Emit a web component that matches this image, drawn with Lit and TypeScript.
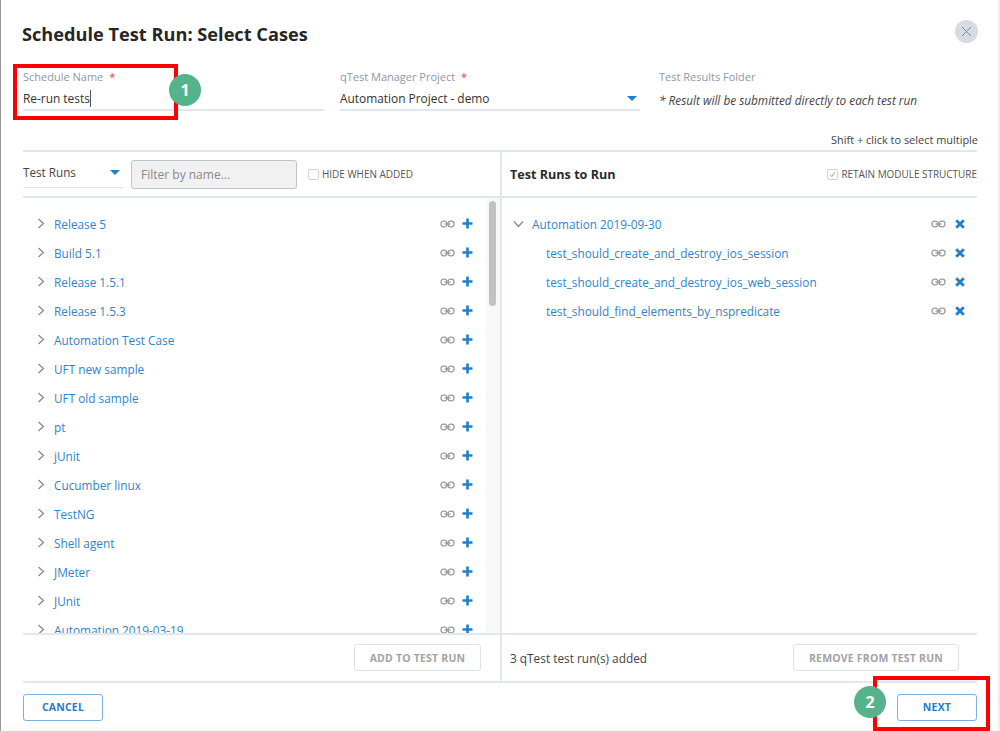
import { LitElement, html, css, svg } from "lit";
import { customElement } from "lit/decorators.js";

const LEFT_RUNS = [
  "Release 5",
  "Build 5.1",
  "Release 1.5.1",
  "Release 1.5.3",
  "Automation Test Case",
  "UFT new sample",
  "UFT old sample",
  "pt",
  "jUnit",
  "Cucumber linux",
  "TestNG",
  "Shell agent",
  "JMeter",
  "JUnit",
  "Automation 2019-03-19",
];

const RIGHT_CASES = [
  "test_should_create_and_destroy_ios_session",
  "test_should_create_and_destroy_ios_web_session",
  "test_should_find_elements_by_nspredicate",
];

const chain = svg`<svg class="chain" width="15" height="10" viewBox="0 0 15 10"><rect x="1" y="2.2" width="6" height="5.6" rx="2.6" fill="none" stroke="#9a9a9a" stroke-width="1.3"/><rect x="8" y="2.2" width="6" height="5.6" rx="2.6" fill="none" stroke="#9a9a9a" stroke-width="1.3"/><path d="M4.5 5h6" stroke="#9a9a9a" stroke-width="1.3"/></svg>`;
const plus = svg`<svg width="11" height="11" viewBox="0 0 11 11"><path d="M5.5 0.5v10M0.5 5.5h10" stroke="#1f7fcb" stroke-width="2.6"/></svg>`;
const cross = svg`<svg width="10" height="10" viewBox="0 0 10 10"><path d="M1.2 1.2l7.6 7.6M8.8 1.2l-7.6 7.6" stroke="#1f7fcb" stroke-width="2.8"/></svg>`;
const chevronRight = svg`<svg width="8" height="11" viewBox="0 0 8 11"><path d="M1.5 1l5 4.5-5 4.5" fill="none" stroke="#8a8a8a" stroke-width="1.3"/></svg>`;
const chevronDown = svg`<svg width="11" height="8" viewBox="0 0 11 8"><path d="M1 1.5l4.5 5 4.5-5" fill="none" stroke="#8a8a8a" stroke-width="1.3"/></svg>`;
const caret = svg`<svg width="10" height="5" viewBox="0 0 10 5"><path d="M0 0h10L5 5z" fill="#1f7fcb"/></svg>`;

@customElement("app-root")
export class AppRoot extends LitElement {
  static styles = css`
    :host {
      display: block;
      position: relative;
      width: 1000px;
      height: 731px;
      overflow: hidden;
      font-family: "Open Sans", sans-serif;
      font-size: 12px;
      color: #333;
      background: #fff;
    }
    .modal {
      box-sizing: border-box;
      height: 731px;
      width: 998px;
      margin-left: 1px;
      padding: 0 21px 0 21px;
      background: linear-gradient(#fff 724px, #f8f8f8);
      display: flex;
      flex-direction: column;
    }
    .edge-left {
      position: absolute;
      left: 0;
      top: 0;
      width: 1px;
      height: 731px;
      background: #999;
    }
    .edge-right {
      position: absolute;
      right: 0;
      top: 0;
      width: 2px;
      height: 731px;
      background: #eee;
    }
    .title-row {
      height: 69px;
      display: flex;
      justify-content: space-between;
      align-items: flex-start;
      flex: none;
    }
    h1 {
      margin: 22px 0 0;
      font-size: 18.2px;
      line-height: 25px;
      font-weight: 700;
      color: #262626;
    }
    .close {
      width: 23px;
      height: 23px;
      margin: 20px 0 0;
      border-radius: 50%;
      background: #d5dce5;
      display: flex;
      align-items: center;
      justify-content: center;
    }
    .fields {
      display: flex;
      height: 42px;
      flex: none;
      padding-left: 1px;
    }
    .field {
      box-sizing: border-box;
      height: 42px;
      border-bottom: 2px solid #e1e7ef;
    }
    .f1 {
      width: 301px;
      margin-right: 16px;
    }
    .f2 {
      width: 300px;
      margin-right: 19px;
    }
    .f3 {
      border: none;
    }
    .label {
      font-size: 11px;
      line-height: 16px;
      color: #8f98a3;
    }
    .req {
      color: #ee3b3b;
      margin-left: 3px;
    }
    .value {
      margin-top: 5px;
      line-height: 17px;
      font-size: 11.9px;
      display: flex;
      justify-content: space-between;
      align-items: center;
      color: #333;
    }
    .cursor {
      border-right: 1px solid #555;
    }
    .value svg {
      margin-right: 3px;
    }
    .note {
      margin-top: 7px;
      font-size: 11.8px;
      line-height: 17px;
      font-style: italic;
      color: #444;
    }
    .hint {
      flex: none;
      height: 39px;
      padding-top: 20px;
      box-sizing: border-box;
      line-height: 17px;
      text-align: right;
      font-size: 10.95px;
      color: #444;
    }
    .panels {
      flex: none;
      margin-left: 1px;
      width: 954px;
      height: 533px;
      display: grid;
      grid-template-columns: 477px 477px;
      border-top: 2px solid #e1e7ef;
      border-bottom: 2px solid #e1e7ef;
      box-sizing: border-box;
    }
    .panel {
      display: flex;
      flex-direction: column;
      min-width: 0;
      min-height: 0;
    }
    .panel.right {
      border-left: 2px solid #e1e7ef;
    }
    .toolbar {
      flex: none;
      box-sizing: border-box;
      height: 46px;
      border-bottom: 2px solid #e1e7ef;
      display: flex;
      align-items: center;
    }
    .right .toolbar {
      padding-left: 8px;
      justify-content: space-between;
    }
    .select {
      box-sizing: border-box;
      width: 100px;
      height: 27px;
      margin-top: 1px;
      border-bottom: 1px solid #e1e7ef;
      display: flex;
      justify-content: space-between;
      align-items: center;
      font-size: 11.7px;
      padding: 0 3px 4px 0;
      color: #444;
    }
    .filter {
      box-sizing: border-box;
      width: 166px;
      height: 29px;
      margin: 1px 11px 0 8px;
      padding-left: 9px;
      background: #f1f1f1;
      border: 1px solid #bfc5cc;
      border-radius: 3px;
      display: flex;
      align-items: center;
      font-size: 12px;
      color: #888;
    }
    .check {
      display: flex;
      align-items: center;
      gap: 3px;
      font-size: 9.95px;
      color: #555;
    }
    .box {
      box-sizing: border-box;
      width: 11px;
      height: 11px;
      border: 1px solid #ccd2d9;
      border-radius: 2px;
      display: flex;
      align-items: center;
      justify-content: center;
    }
    h2 {
      margin: 0;
      font-size: 12.6px;
      font-weight: 700;
      color: #2b2b2b;
    }
    .list-wrap {
      flex: 1;
      min-height: 0;
      display: flex;
      overflow: hidden;
    }
    .list {
      flex: 1;
      min-width: 0;
      padding-top: 11px;
    }
    .row {
      height: 29px;
      display: flex;
      align-items: center;
      font-size: 11.8px;
      color: #2f84c9;
      white-space: nowrap;
    }
    .left .row {
      padding: 0 13px 0 14px;
    }
    .right .row {
      padding: 0 12px 0 11px;
    }
    .chev {
      width: 17px;
      flex: none;
      display: flex;
    }
    .right .chev {
      width: 19px;
    }
    .row.child {
      padding-left: 44px;
    }
    .name {
      flex: 1;
    }
    .actions {
      display: flex;
      align-items: center;
      gap: 7px;
    }
    .chain {
      display: block;
    }
    .right .actions {
      gap: 9px;
    }
    .track {
      flex: none;
      width: 14px;
      background: #f8f8f8;
    }
    .thumb {
      width: 7px;
      height: 105px;
      margin: 3px 0 0 3px;
      border-radius: 4px;
      background: #c2c2c2;
    }
    .footer {
      flex: none;
      box-sizing: border-box;
      height: 48px;
      padding-bottom: 1px;
      border-top: 2px solid #e1e7ef;
      display: flex;
      align-items: center;
      justify-content: space-between;
    }
    .left .footer {
      justify-content: flex-end;
      padding-right: 19px;
    }
    .right .footer {
      padding: 0 18px 1px 8px;
      font-size: 11.85px;
      color: #444;
    }
    .btn {
      box-sizing: border-box;
      height: 27px;
      display: flex;
      align-items: center;
      justify-content: center;
      border-radius: 3px;
      font-size: 10.5px;
      font-weight: 700;
      letter-spacing: 0.2px;
    }
    .btn.off {
      border: 1px solid #dde3ea;
      color: #a3a3a3;
    }
    .btn.add {
      width: 127px;
    }
    .btn.remove {
      width: 166px;
    }
    .btn.primary {
      width: 80px;
      padding-bottom: 1px;
      border: 1px solid #7fb0dd;
      color: #2a7cc2;
    }
    .actions-bar {
      flex: none;
      display: flex;
      justify-content: space-between;
      margin: 11px 0 0 1px;
      width: 954px;
    }
    .mark {
      position: absolute;
      box-sizing: border-box;
      border: 4px solid #f00;
    }
    .mark.one {
      left: 13px;
      top: 64px;
      width: 165px;
      height: 56px;
    }
    .mark.two {
      left: 873px;
      top: 676px;
      width: 117px;
      height: 55px;
    }
    .badge {
      position: absolute;
      width: 32px;
      height: 32px;
      border-radius: 50%;
      background: #55b38c;
      color: #fff;
      font-size: 16px;
      font-weight: 700;
      line-height: 32px;
      text-align: center;
    }
    .badge.one {
      left: 169px;
      top: 74px;
    }
    .badge.two {
      left: 854px;
      top: 686px;
    }
  `;

  render() {
    return html`
      <div class="edge-left"></div>
      <div class="edge-right"></div>
      <div class="modal">
        <div class="title-row">
          <h1>Schedule Test Run: Select Cases</h1>
          <div class="close">
            <svg width="11" height="11" viewBox="0 0 11 11"><path d="M1 1l9 9M10 1l-9 9" stroke="#7d8791" stroke-width="1"/></svg>
          </div>
        </div>
        <div class="fields">
          <div class="field f1">
            <div class="label">Schedule Name <span class="req">*</span></div>
            <div class="value"><span class="cursor">Re-run tests</span></div>
          </div>
          <div class="field f2">
            <div class="label">qTest Manager Project <span class="req">*</span></div>
            <div class="value">Automation Project - demo ${caret}</div>
          </div>
          <div class="field f3">
            <div class="label">Test Results Folder</div>
            <div class="note">* Result will be submitted directly to each test run</div>
          </div>
        </div>
        <div class="hint">Shift + click to select multiple</div>
        <div class="panels">
          <section class="panel left">
            <div class="toolbar">
              <div class="select">Test Runs ${caret}</div>
              <div class="filter">Filter by name...</div>
              <div class="check"><span class="box"></span>HIDE WHEN ADDED</div>
            </div>
            <div class="list-wrap">
              <div class="list">
                ${LEFT_RUNS.map(
                  (run) => html`<div class="row">
                    <span class="chev">${chevronRight}</span>
                    <span class="name">${run}</span>
                    <span class="actions">${chain}${plus}</span>
                  </div>`
                )}
              </div>
              <div class="track"><div class="thumb"></div></div>
            </div>
            <div class="footer"><div class="btn off add">ADD TO TEST RUN</div></div>
          </section>
          <section class="panel right">
            <div class="toolbar">
              <h2>Test Runs to Run</h2>
              <div class="check">
                <span class="box">
                  <svg width="7" height="7" viewBox="0 0 7 7"><path d="M1 3.5l1.8 2L6 1" fill="none" stroke="#999" stroke-width="0.9"/></svg>
                </span>
                RETAIN MODULE STRUCTURE
              </div>
            </div>
            <div class="list-wrap">
              <div class="list">
                <div class="row">
                  <span class="chev">${chevronDown}</span>
                  <span class="name">Automation 2019-09-30</span>
                  <span class="actions">${chain}${cross}</span>
                </div>
                ${RIGHT_CASES.map(
                  (name) => html`<div class="row child">
                    <span class="name">${name}</span>
                    <span class="actions">${chain}${cross}</span>
                  </div>`
                )}
              </div>
            </div>
            <div class="footer">
              <span>3 qTest test run(s) added</span>
              <div class="btn off remove">REMOVE FROM TEST RUN</div>
            </div>
          </section>
        </div>
        <div class="actions-bar">
          <div class="btn primary">CANCEL</div>
          <div class="btn primary">NEXT</div>
        </div>
      </div>
      <div class="mark one"></div>
      <div class="badge one">1</div>
      <div class="mark two"></div>
      <div class="badge two">2</div>
    `;
  }
}
